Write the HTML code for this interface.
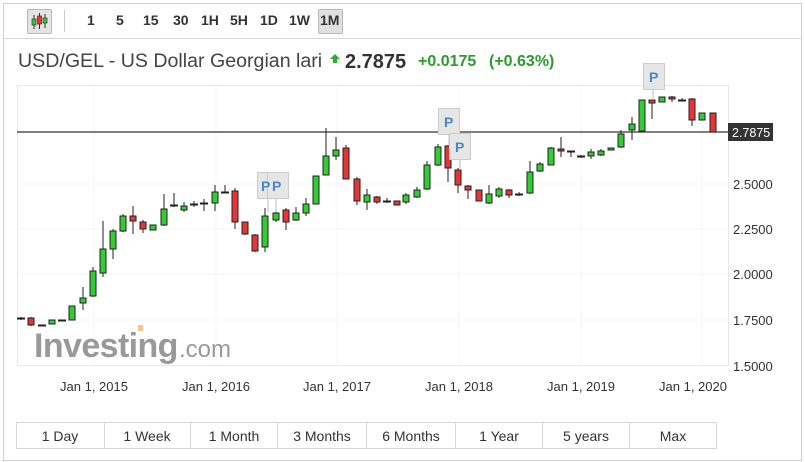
<!DOCTYPE html>
<html><head><meta charset="utf-8"><style>
*{margin:0;padding:0;box-sizing:border-box}
body{width:805px;height:462px;background:#fff;font-family:"Liberation Sans",sans-serif;position:relative;overflow:hidden;color:#333}
.a{position:absolute}
.tb{font-size:14px;font-weight:bold;color:#333;top:12px}
</style></head><body>
<div class="a" style="left:3px;top:3px;width:799px;height:458px;border:1px solid #cfcfcf"></div>
<div class="a" style="left:3px;top:38px;width:799px;height:1px;background:#d6d6d6"></div>
<div class="a" style="left:27px;top:9px;width:25px;height:25px;border:1px solid #b8b8b8;background:#e4e4e4;border-radius:2px"></div>
<svg class="a" style="left:27px;top:9px" width="25" height="25">
<line x1="7" y1="6" x2="7" y2="20" stroke="#333"/><rect x="5" y="10" width="4" height="6" fill="#3c3" stroke="#333" stroke-width=".7"/>
<line x1="12.5" y1="4" x2="12.5" y2="20" stroke="#333"/><rect x="10.5" y="7" width="4" height="8" fill="#e33" stroke="#333" stroke-width=".7"/>
<line x1="18" y1="5" x2="18" y2="19" stroke="#333"/><rect x="16" y="9" width="4" height="5" fill="#3c3" stroke="#333" stroke-width=".7"/>
</svg>
<div class="a" style="left:64px;top:10px;width:1px;height:22px;background:#ccc"></div>
<div class="a tb" style="left:87px">1</div>
<div class="a tb" style="left:116px">5</div>
<div class="a tb" style="left:143px">15</div>
<div class="a tb" style="left:173px">30</div>
<div class="a tb" style="left:201px">1H</div>
<div class="a tb" style="left:230px">5H</div>
<div class="a tb" style="left:260px">1D</div>
<div class="a tb" style="left:289px">1W</div>
<div class="a" style="left:318px;top:9px;width:25px;height:25px;border:1px solid #b8b8b8;background:#e0e0e0;border-radius:2px"></div>
<div class="a tb" style="left:320px">1M</div>
<div class="a" style="left:18px;top:50px;font-size:19.6px;color:#444;white-space:nowrap">USD/GEL - US Dollar Georgian lari</div>
<svg class="a" style="left:330px;top:54px" width="10" height="10"><path d="M5 0L10 5H7V9H3V5H0Z" fill="#2eae2e"/></svg>
<div class="a" style="left:345px;top:51px;font-size:20px;font-weight:bold;color:#333">2.7875</div>
<div class="a" style="left:418px;top:53px;font-size:16px;font-weight:bold;color:#2a9d2a;white-space:nowrap">+0.0175</div>
<div class="a" style="left:489px;top:53px;font-size:16px;font-weight:bold;color:#2a9d2a;white-space:nowrap">(+0.63%)</div>

<svg class="a" style="left:0;top:0" width="805" height="462">
<rect x="17.5" y="85.5" width="711" height="280" fill="none" stroke="#e8e8e8"/>
<g stroke="#f5f5f5">
<line x1="94" y1="86" x2="94" y2="365"/><line x1="216" y1="86" x2="216" y2="365"/><line x1="337" y1="86" x2="337" y2="365"/><line x1="459" y1="86" x2="459" y2="365"/><line x1="581" y1="86" x2="581" y2="365"/><line x1="702" y1="86" x2="702" y2="365"/>
<line x1="18" y1="184" x2="728" y2="184"/><line x1="18" y1="229" x2="728" y2="229"/><line x1="18" y1="274" x2="728" y2="274"/><line x1="18" y1="320" x2="728" y2="320"/>
</g>
<text x="34" y="357" font-family="Liberation Sans" font-weight="bold" font-size="34" fill="#999" letter-spacing="-0.6">Investing</text>
<text x="179" y="357" font-family="Liberation Sans" font-size="24" fill="#999">.com</text>
<rect x="138" y="325" width="5" height="6" fill="#f3c58a"/>
<line x1="17" y1="132" x2="729" y2="132" stroke="#333" stroke-width="1.2"/>
</svg>
<svg class="a" style="left:0;top:0" width="805" height="462">
<g stroke="#222" stroke-width="1">
<line x1="21" y1="317" x2="21" y2="320"/><line x1="17" y1="318.5" x2="25" y2="318.5" stroke-width="2"/>
<line x1="31" y1="317" x2="31" y2="326"/><rect x="28" y="318" width="6" height="7" fill="#e53535"/>
<line x1="38" y1="325.5" x2="46" y2="325.5" stroke-width="2"/>
<rect x="49" y="320" width="6" height="4" fill="#3c3"/>
<line x1="58" y1="320.5" x2="66" y2="320.5" stroke-width="2"/>
<rect x="69" y="306" width="6" height="14" fill="#3c3"/>
<line x1="83" y1="287" x2="83" y2="310"/><rect x="80" y="298" width="6" height="5" fill="#3c3"/>
<line x1="93" y1="267" x2="93" y2="297"/><rect x="90" y="271" width="6" height="25" fill="#3c3"/>
<line x1="103" y1="221" x2="103" y2="277"/><rect x="100" y="249" width="6" height="24" fill="#3c3"/>
<line x1="113" y1="229" x2="113" y2="259"/><rect x="110" y="231" width="6" height="18" fill="#3c3"/>
<line x1="123" y1="214" x2="123" y2="232"/><rect x="120" y="216" width="6" height="15" fill="#3c3"/>
<line x1="133" y1="206" x2="133" y2="234"/><rect x="130" y="216" width="6" height="5" fill="#e53535"/>
<line x1="143" y1="220" x2="143" y2="233"/><rect x="140" y="222" width="6" height="7" fill="#e53535"/>
<rect x="150" y="225" width="6" height="5" fill="#3c3"/>
<line x1="164" y1="194" x2="164" y2="226"/><rect x="161" y="209" width="6" height="16" fill="#3c3"/>
<line x1="174" y1="193" x2="174" y2="207"/><line x1="170" y1="205.5" x2="178" y2="205.5" stroke-width="2"/>
<line x1="184" y1="202" x2="184" y2="212"/><rect x="181" y="206" width="6" height="4" fill="#3c3"/>
<line x1="194" y1="201" x2="194" y2="207"/><line x1="190" y1="204.5" x2="198" y2="204.5" stroke-width="2"/>
<line x1="204" y1="199" x2="204" y2="211"/><line x1="200" y1="203.5" x2="208" y2="203.5" stroke-width="2"/>
<line x1="215" y1="185" x2="215" y2="211"/><rect x="212" y="192" width="6" height="11" fill="#3c3"/>
<line x1="225" y1="185" x2="225" y2="192"/><line x1="221" y1="192.5" x2="229" y2="192.5" stroke-width="2"/>
<line x1="235" y1="188" x2="235" y2="229"/><rect x="232" y="191" width="6" height="31" fill="#e53535"/>
<line x1="245" y1="222" x2="245" y2="235"/><rect x="242" y="222" width="6" height="12" fill="#e53535"/>
<line x1="255" y1="234" x2="255" y2="252"/><rect x="252" y="235" width="6" height="16" fill="#e53535"/>
<line x1="265" y1="208" x2="265" y2="252"/><rect x="262" y="216" width="6" height="31" fill="#3c3"/>
<line x1="276" y1="212" x2="276" y2="222"/><rect x="273" y="213" width="6" height="7" fill="#3c3"/>
<line x1="286" y1="208" x2="286" y2="230"/><rect x="283" y="210" width="6" height="12" fill="#e53535"/>
<line x1="296" y1="207" x2="296" y2="221"/><rect x="293" y="213" width="6" height="7" fill="#3c3"/>
<line x1="306" y1="198" x2="306" y2="216"/><rect x="303" y="204" width="6" height="9" fill="#3c3"/>
<rect x="313" y="176" width="6" height="28" fill="#3c3"/>
<line x1="326" y1="128" x2="326" y2="175"/><rect x="323" y="156" width="6" height="19" fill="#3c3"/>
<line x1="336" y1="137" x2="336" y2="160"/><rect x="333" y="150" width="6" height="6" fill="#3c3"/>
<line x1="346" y1="145" x2="346" y2="179"/><rect x="343" y="148" width="6" height="31" fill="#e53535"/>
<line x1="357" y1="177" x2="357" y2="205"/><rect x="354" y="179" width="6" height="22" fill="#e53535"/>
<line x1="367" y1="189" x2="367" y2="210"/><rect x="364" y="195" width="6" height="7" fill="#3c3"/>
<line x1="377" y1="196" x2="377" y2="204"/><rect x="374" y="197" width="6" height="5" fill="#e53535"/>
<line x1="387" y1="198" x2="387" y2="203"/><line x1="383" y1="201.5" x2="391" y2="201.5" stroke-width="2"/>
<rect x="394" y="201" width="6" height="4" fill="#e53535"/>
<line x1="406" y1="193" x2="406" y2="204"/><rect x="403" y="195" width="6" height="7" fill="#3c3"/>
<line x1="417" y1="187" x2="417" y2="198"/><rect x="414" y="190" width="6" height="7" fill="#3c3"/>
<line x1="427" y1="161" x2="427" y2="190"/><rect x="424" y="165" width="6" height="24" fill="#3c3"/>
<line x1="438" y1="144" x2="438" y2="166"/><rect x="435" y="147" width="6" height="18" fill="#3c3"/>
<line x1="448" y1="145" x2="448" y2="182"/><rect x="445" y="146" width="6" height="22" fill="#e53535"/>
<line x1="458" y1="168" x2="458" y2="193"/><rect x="455" y="170" width="6" height="15" fill="#e53535"/>
<line x1="468" y1="185" x2="468" y2="199"/><rect x="465" y="186" width="6" height="4" fill="#e53535"/>
<rect x="476" y="190" width="6" height="11" fill="#e53535"/>
<line x1="489" y1="185" x2="489" y2="204"/><rect x="486" y="194" width="6" height="9" fill="#3c3"/>
<line x1="499" y1="187" x2="499" y2="198"/><rect x="496" y="189" width="6" height="7" fill="#3c3"/>
<line x1="509" y1="189" x2="509" y2="198"/><rect x="506" y="190" width="6" height="5" fill="#e53535"/>
<line x1="519" y1="192" x2="519" y2="196"/><line x1="515" y1="194.5" x2="523" y2="194.5" stroke-width="2"/>
<line x1="530" y1="161" x2="530" y2="194"/><rect x="527" y="172" width="6" height="21" fill="#3c3"/>
<line x1="540" y1="162" x2="540" y2="172"/><rect x="537" y="164" width="6" height="7" fill="#3c3"/>
<line x1="551" y1="147" x2="551" y2="165"/><rect x="548" y="148" width="6" height="17" fill="#3c3"/>
<line x1="561" y1="137" x2="561" y2="157"/><rect x="558" y="149" width="6" height="2" fill="#e53535"/>
<line x1="571" y1="151" x2="571" y2="157"/><line x1="567" y1="151.5" x2="575" y2="151.5" stroke-width="2"/>
<line x1="581" y1="155" x2="581" y2="158"/><line x1="577" y1="156.5" x2="585" y2="156.5" stroke-width="2"/>
<line x1="591" y1="149" x2="591" y2="159"/><rect x="588" y="152" width="6" height="4" fill="#3c3"/>
<line x1="601" y1="149" x2="601" y2="156"/><rect x="598" y="151" width="6" height="4" fill="#3c3"/>
<rect x="608" y="148" width="6" height="2" fill="#3c3"/>
<line x1="621" y1="130" x2="621" y2="148"/><rect x="618" y="134" width="6" height="13" fill="#3c3"/>
<line x1="632" y1="117" x2="632" y2="140"/><rect x="629" y="124" width="6" height="6" fill="#3c3"/>
<rect x="639" y="100" width="6" height="31" fill="#3c3"/>
<line x1="652" y1="100" x2="652" y2="119"/><rect x="649" y="100" width="6" height="3" fill="#e53535"/>
<rect x="659" y="97" width="6" height="5" fill="#3c3"/>
<line x1="672" y1="96" x2="672" y2="102"/><rect x="669" y="97" width="6" height="2" fill="#e53535"/>
<line x1="682" y1="98" x2="682" y2="101"/><line x1="678" y1="100.5" x2="686" y2="100.5" stroke-width="2"/>
<line x1="692" y1="98" x2="692" y2="126"/><rect x="689" y="99" width="6" height="21" fill="#e53535"/>
<rect x="699" y="113" width="6" height="7" fill="#3c3"/>
<rect x="710" y="113" width="6" height="19" fill="#e53535"/>
</g>
<g stroke="#bbb" stroke-width="1">
<line x1="268" y1="199" x2="268" y2="212"/><line x1="276" y1="199" x2="276" y2="212"/>
<line x1="449" y1="134" x2="449" y2="146"/><line x1="460" y1="160" x2="460" y2="170"/>
<line x1="653" y1="89" x2="653" y2="100"/>
</g>
<g fill="#e6e6e6" stroke="#ccc">
<rect x="257.5" y="172.5" width="21" height="26"/>
<rect x="267.5" y="172.5" width="21" height="26"/>
<rect x="438.5" y="108.5" width="21" height="26"/>
<rect x="449.5" y="133.5" width="21" height="26"/>
<rect x="643.5" y="63.5" width="21" height="26"/>
</g>
<g font-family="Liberation Sans" font-weight="bold" font-size="14" fill="#4a86c8">
<text x="261" y="191">P</text><text x="272" y="191">P</text>
<text x="444" y="127">P</text><text x="455" y="152">P</text><text x="649" y="82">P</text>
</g>
<rect x="728" y="123" width="45" height="18" fill="#333"/>
<text x="732" y="137" font-family="Liberation Sans" font-size="12.5" fill="#fff">2.7875</text>
<g font-family="Liberation Sans" font-size="13" fill="#333">
<text x="733" y="189">2.5000</text><text x="733" y="234">2.2500</text><text x="733" y="279">2.0000</text><text x="733" y="325">1.7500</text><text x="733" y="371">1.5000</text>
</g>
<g font-family="Liberation Sans" font-size="13" fill="#333" text-anchor="middle">
<text x="94" y="391">Jan 1, 2015</text><text x="216" y="391">Jan 1, 2016</text><text x="337" y="391">Jan 1, 2017</text><text x="459" y="391">Jan 1, 2018</text><text x="581" y="391">Jan 1, 2019</text><text x="693" y="391">Jan 1, 2020</text>
</g>
<rect x="16.5" y="422.5" width="700" height="26" fill="none" stroke="#d6d6d6"/>
<g stroke="#d6d6d6"><line x1="104.5" y1="423" x2="104.5" y2="448"/><line x1="190.5" y1="423" x2="190.5" y2="448"/><line x1="277.5" y1="423" x2="277.5" y2="448"/><line x1="366.5" y1="423" x2="366.5" y2="448"/><line x1="455.5" y1="423" x2="455.5" y2="448"/><line x1="542.5" y1="423" x2="542.5" y2="448"/><line x1="629.5" y1="423" x2="629.5" y2="448"/></g>
<g font-family="Liberation Sans" font-size="14" fill="#333" text-anchor="middle">
<text x="60" y="441">1 Day</text><text x="147" y="441">1 Week</text><text x="234" y="441">1 Month</text><text x="322" y="441">3 Months</text><text x="411" y="441">6 Months</text><text x="499" y="441">1 Year</text><text x="586" y="441">5 years</text><text x="673" y="441">Max</text>
</g>
</svg>
</body></html>
